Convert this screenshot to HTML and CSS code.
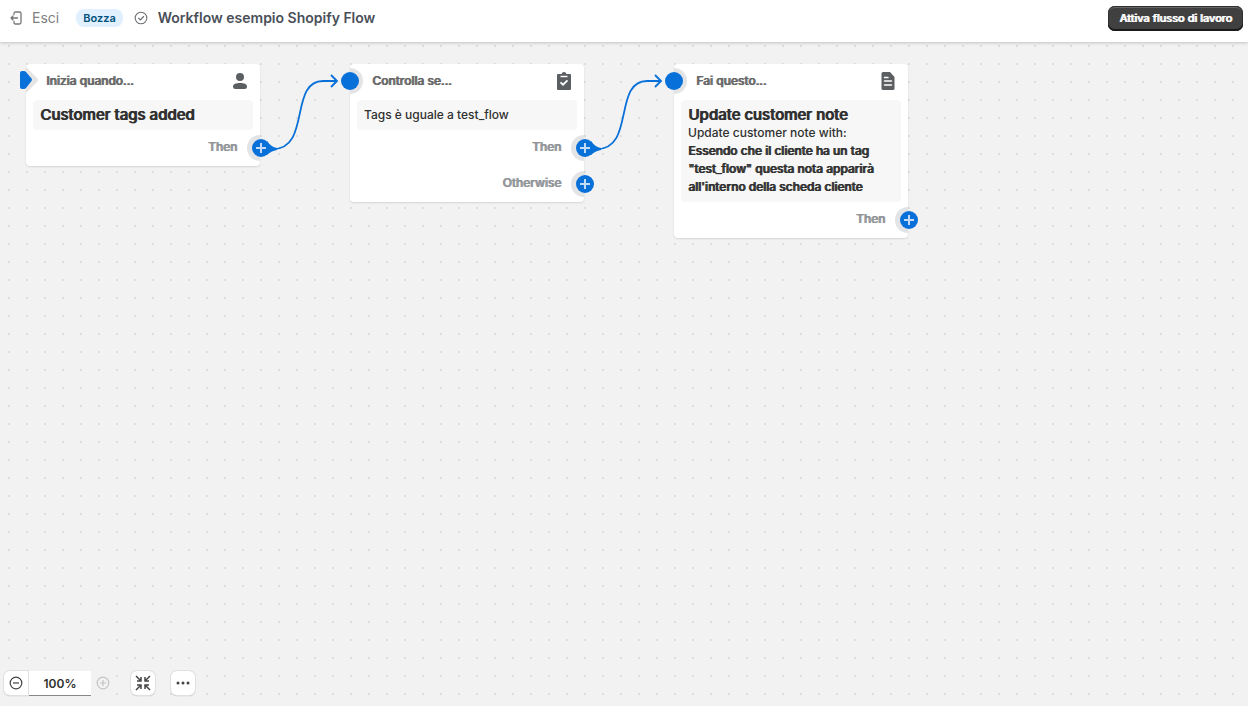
FILE: index.html
```html
<!DOCTYPE html>
<html lang="it">
<head>
    <meta charset="UTF-8">
    <meta name="viewport" content="width=device-width, initial-scale=1.0">
    <title>Workflow esempio Shopify Flow</title>
    <link rel="stylesheet" href="styles.css">
</head>
<body>

    <header class="topbar">
        <a href="#" class="exit">
            <svg width="12" height="14" viewBox="0 0 12 14" fill="none" stroke="#777" stroke-width="1.3" stroke-linecap="round" stroke-linejoin="round">
                <path d="M4 3.5V2.5Q4 1 5.500 1H9.500Q11 1 11 2.500V11.500Q11 13 9.500 13H5.500Q4 13 4 11.500V10.500"/>
                <path d="M7.500 7H1M3 5L1 7L3 9"/>
            </svg>
            Esci
        </a>
        <span class="badge">Bozza</span>
        <svg class="status" width="14" height="14" viewBox="0 0 14 14" fill="none" stroke="#6d7175" stroke-width="1.1" stroke-linecap="round" stroke-linejoin="round">
            <circle cx="7" cy="7" r="5.800"/>
            <path d="M4.500 7.200L6.300 9L9.600 5.500"/>
        </svg>
        <h1>Workflow esempio Shopify Flow</h1>
        <button type="button" class="activate">Attiva flusso di lavoro</button>
    </header>

    <main class="canvas">

        <!-- Trigger -->
        <section class="node node-trigger">
            <div class="node-head">
                <h2>Inizia quando...</h2>
                <svg width="16" height="18" viewBox="0 0 16 18" fill="#5c5f62">
                    <circle cx="8" cy="5" r="4"/>
                    <path d="M1 14.500C1 12 4 11 8 11S15 12 15 14.500Q15 17 12.500 17H3.500Q1 17 1 14.500Z"/>
                </svg>
            </div>
            <div class="node-body">
                <h3>Customer tags added</h3>
            </div>
            <div class="branch">Then
                <span class="halo halo-right"></span>
                <button type="button" class="plus" aria-label="Aggiungi passaggio"></button>
            </div>
            <svg class="start" width="20" height="28" viewBox="0 0 20 28">
                <path d="M6 1L17 12Q19 14 17 16L6 27Z" fill="#e6e3e3"/>
                <path d="M0 7Q0 5 2 5H4Q5 5 6 6L11.500 12.500Q12.500 13.700 11.500 15L6 22Q5 23 4 23H2Q0 23 0 21Z" fill="#0870d9"/>
            </svg>
        </section>

        <!-- Condition -->
        <section class="node node-condition">
            <div class="node-head">
                <h2>Controlla se...</h2>
                <svg width="16" height="18" viewBox="0 0 16 18">
                    <path d="M2 2H5.500Q6 0 8 0T10.500 2H14Q15 2 15 3V17Q15 18 14 18H2Q1 18 1 17V3Q1 2 2 2Z" fill="#5c5f62"/>
                    <path d="M4.500 4.500H11.500" stroke="#fff" stroke-width="1.400"/>
                    <path d="M4.500 10.300L7 12.700L11.500 8.300" fill="none" stroke="#fff" stroke-width="1.700"/>
                </svg>
            </div>
            <div class="node-body">
                <p>Tags è uguale a test_flow</p>
            </div>
            <div class="branch">Then
                <span class="halo halo-right"></span>
                <button type="button" class="plus" aria-label="Aggiungi passaggio"></button>
            </div>
            <div class="branch">Otherwise
                <span class="halo halo-right"></span>
                <button type="button" class="plus" aria-label="Aggiungi passaggio"></button>
            </div>
            <span class="halo halo-left"></span>
            <span class="port"></span>
        </section>

        <!-- Action -->
        <section class="node node-action">
            <div class="node-head">
                <h2>Fai questo...</h2>
                <svg width="16" height="18" viewBox="0 0 16 18">
                    <path d="M3 0H10L14.500 5V16.500Q14.500 18 13 18H3Q1.500 18 1.500 16.500V1.500Q1.500 0 3 0Z" fill="#5c5f62"/>
                    <path d="M4.500 5.500H8M4.500 9H11.500M4.500 13H11.500" stroke="#fff" stroke-width="1.500" stroke-linecap="round"/>
                </svg>
            </div>
            <div class="node-body">
                <h3>Update customer note</h3>
                <p>Update customer note with:<br><strong>Essendo che il cliente ha un tag "test_flow" questa nota apparirà all'interno della scheda cliente</strong></p>
            </div>
            <div class="branch">Then
                <span class="halo halo-right"></span>
                <button type="button" class="plus" aria-label="Aggiungi passaggio"></button>
            </div>
            <span class="halo halo-left"></span>
            <span class="port"></span>
        </section>

        <svg class="wire wire-first" width="90" height="90" viewBox="0 0 90 90">
            <path d="M12 79C50 79 28 11 62 11H76M70 5L76 11L70 17" fill="none" stroke="#0870d9" stroke-width="1.800"/>
            <path d="M6 71Q10 77 16 78V80Q10 81 6 85Z" fill="#0870d9"/>
        </svg>
        <svg class="wire wire-second" width="90" height="90" viewBox="0 0 90 90">
            <path d="M12 79C50 79 28 11 62 11H76M70 5L76 11L70 17" fill="none" stroke="#0870d9" stroke-width="1.800"/>
            <path d="M6 71Q10 77 16 78V80Q10 81 6 85Z" fill="#0870d9"/>
        </svg>

        <div class="toolbar">
            <div class="zoom">
                <button type="button" class="tool tool-out" aria-label="Riduci">
                    <svg width="14" height="14" viewBox="0 0 14 14" fill="none" stroke="#444" stroke-width="1.200">
                        <circle cx="7" cy="7" r="5.800"/>
                        <path d="M4 7H10"/>
                    </svg>
                </button>
                <button type="button" class="level">100%</button>
                <button type="button" class="tool tool-in" aria-label="Ingrandisci" disabled>
                    <svg width="14" height="14" viewBox="0 0 14 14" fill="none" stroke="#c4c4c4" stroke-width="1.200">
                        <circle cx="7" cy="7" r="5.800"/>
                        <path d="M4 7H10M7 4V10"/>
                    </svg>
                </button>
            </div>
            <button type="button" class="tool" aria-label="Adatta allo schermo">
                <svg width="16" height="16" viewBox="0 0 16 16" fill="none" stroke="#444" stroke-width="1.500">
                    <path d="M1 1L5 5M2 6H6V2M15 1L11 5M10 2V6H14M1 15L5 11M2 10H6V14M15 15L11 11M14 10H10V14"/>
                </svg>
            </button>
            <button type="button" class="tool" aria-label="Altro">
                <svg width="14" height="14" viewBox="0 0 14 14" fill="#444">
                    <circle cx="2" cy="7" r="1.500"/>
                    <circle cx="7" cy="7" r="1.500"/>
                    <circle cx="12" cy="7" r="1.500"/>
                </svg>
            </button>
        </div>
    </main>

</body>
</html>
```
FILE: styles.css
```css
* {
    box-sizing: border-box;
}

body {
    margin: 0;
    min-height: 100vh;
    display: flex;
    flex-direction: column;
    font-family: Inter, "Liberation Sans", sans-serif;
    font-size: 12px;
    line-height: 18px;
    color: #303030;
}

h1, h2, h3, p {
    margin: 0;
}

button {
    font-family: inherit;
    padding: 0;
    border: none;
    cursor: pointer;
}

svg {
    display: block;
    flex: none;
}

/* Top bar */
.topbar {
    display: flex;
    align-items: center;
    height: 42px;
    padding: 0 5px 6px 10px;
    background: white;
    box-shadow: 0 1px 3px rgba(0, 0, 0, 0.2);
    z-index: 1;
}

.exit {
    display: flex;
    align-items: center;
    gap: 10px;
    margin-right: 17px;
    font-size: 14px;
    color: #808080;
    text-decoration: none;
}

.badge {
    padding: 0 7px;
    border-radius: 8px;
    background: #e0f0ff;
    color: #00527c;
    font-size: 11px;
    font-weight: 600;
}

.status {
    margin: 0 10px 0 11px;
}

h1 {
    font-size: 14px;
    font-weight: 600;
    color: #4a4f58;
}

.activate {
    height: 25px;
    margin-left: auto;
    padding: 0 11px;
    border-radius: 7px;
    background: #404040;
    box-shadow: inset 0 -2px 0 #1a1a1a, inset 0 0 0 1px #303030, inset 0 2px 0 #666;
    color: white;
    font-size: 11px;
}

/* Heavy strokes on the medium weight */
h2, h3, strong, .branch, .activate {
    font-weight: 500;
    text-shadow: 1px 0 0 currentColor;
}

/* Canvas with dotted grid */
.canvas {
    position: relative;
    flex: 1;
    background-color: #f2f2f2;
    background-image: radial-gradient(circle, #dedede 1px, transparent 1px);
    background-size: 18px 18px;
    background-position: 0 -5px;
}

/* Nodes */
.node {
    position: absolute;
    top: 22px;
    width: 234px;
    background: white;
    border-radius: 4px;
    box-shadow: 0 1px 2px rgba(0, 0, 0, 0.12);
}

.node-trigger {
    left: 26px;
}

.node-condition {
    left: 350px;
}

.node-action {
    left: 674px;
}

.node-head {
    display: flex;
    align-items: center;
    justify-content: space-between;
    height: 36px;
    padding: 0 12px 2px 22px;
}

.node-trigger .node-head {
    padding-left: 20px;
}

h2 {
    font-size: 12px;
    color: #686868;
}

.node-body {
    margin: 0 7px;
    padding: 6px 7px;
    border-radius: 4px;
    background: #f7f7f7;
}

h3 {
    font-size: 15px;
    line-height: 18px;
}

p {
    font-weight: 500;
}

.branch {
    position: relative;
    height: 36px;
    padding: 8px 23px 0 0;
    text-align: right;
    color: #919599;
}

.halo {
    position: absolute;
    width: 13px;
    height: 26px;
    background: #e3e4e6;
}

.halo-right {
    right: 0;
    top: 5px;
    border-radius: 13px 0 0 13px;
}

.halo-left {
    left: 0;
    top: 4px;
    border-radius: 0 13px 13px 0;
}

.port {
    position: absolute;
    left: -9px;
    top: 8px;
    width: 18px;
    height: 18px;
    border-radius: 50%;
    background: #0870d9;
}

.plus {
    position: absolute;
    right: -10px;
    top: 9px;
    width: 18px;
    height: 18px;
    border-radius: 50%;
    background:
        linear-gradient(#c4dbf5, #c4dbf5) center / 10px 2px no-repeat,
        linear-gradient(#c4dbf5, #c4dbf5) center / 2px 10px no-repeat,
        #0870d9;
}

.start {
    position: absolute;
    left: -6px;
    top: 2px;
}

.wire {
    position: absolute;
    top: 28px;
    pointer-events: none;
}

.wire-first {
    left: 261px;
}

.wire-second {
    left: 585px;
}

/* Zoom controls */
.toolbar {
    position: absolute;
    left: 4px;
    bottom: 11px;
    display: flex;
    gap: 16px;
}

.zoom {
    display: flex;
}

.tool {
    display: flex;
    align-items: center;
    justify-content: center;
    width: 24px;
    height: 24px;
    border-radius: 6px;
    background: white;
    box-shadow: 0 0 0 1px #e0e0e0, 0 1px 1px #a0a0a0;
}

.tool-out {
    border-radius: 6px 0 0 6px;
}

.level {
    width: 62px;
    height: 24px;
    margin-left: 1px;
    background: white;
    box-shadow: 0 1px 0 #888;
    font-size: 12px;
    font-weight: 600;
    color: #303030;
}

.tool-in {
    background: #f2f2f2;
    box-shadow: none;
}
```
